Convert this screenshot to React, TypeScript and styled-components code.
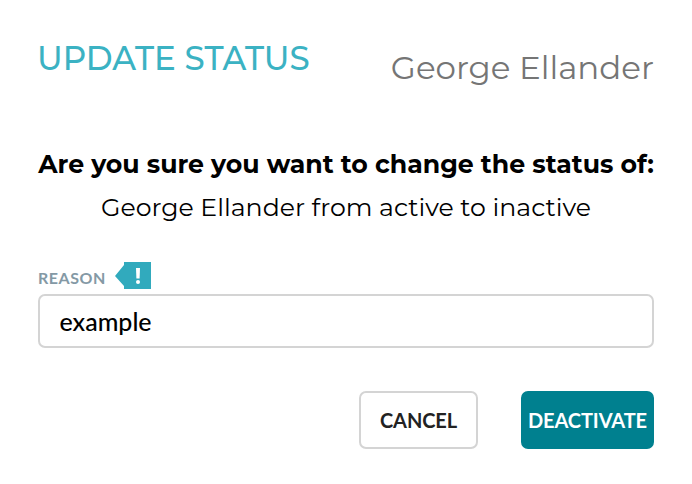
import React, { useState } from "react";
import styled, { createGlobalStyle } from "styled-components";

const GlobalStyle = createGlobalStyle`
  *, *::before, *::after { box-sizing: border-box; }
  body { margin: 0; background: #fff; }
`;

const Dialog = styled.main`
  width: 692px;
  height: 484px;
  padding: 38px 38px 0;
  background: #fff;
  color: #000;
  font-family: Montserrat, Inter, "Open Sans", sans-serif;
  white-space: nowrap;
  overflow: hidden;
`;

const Header = styled.header`
  display: flex;
  justify-content: space-between;
  align-items: flex-start;
  height: 102px;
`;

const Title = styled.h1`
  margin: 0 0 0 -1px;
  font-size: 32.5px;
  font-weight: 500;
  line-height: 42px;
  color: #3bb2c3;
`;

const PersonName = styled.span`
  margin: 9px 0 0;
  font-size: 32.5px;
  font-weight: 400;
  line-height: 42px;
  color: #757575;
`;

const Message = styled.section`
  display: flex;
  flex-direction: column;
  align-items: center;
  height: 118px;
`;

const Question = styled.strong`
  margin-top: 6px;
  font-size: 25.2px;
  font-weight: 700;
  line-height: 36px;
`;

const Change = styled.span`
  margin-top: 7px;
  font-size: 25.2px;
  line-height: 36px;
`;

const Field = styled.div`
  font-family: Lato, sans-serif;
`;

const LabelRow = styled.div`
  display: flex;
  height: 36px;
  padding-top: 4px;
`;

const Label = styled.label`
  width: 77px;
  padding-top: 6px;
  font-size: 16px;
  font-weight: 700;
  line-height: 20px;
  letter-spacing: 0.55px;
  color: #8499a5;
`;

const RequiredFlag = styled.svg`
  display: block;
  width: 36px;
  height: 27px;
`;

const Input = styled.input`
  display: block;
  width: 616px;
  height: 54px;
  padding: 0 19.5px;
  border: 2px solid #d4d4d4;
  border-radius: 7px;
  outline: none;
  background: #fff;
  color: #000;
  font: 500 25px Lato, sans-serif;
`;

const Actions = styled.footer`
  display: flex;
  justify-content: flex-end;
  gap: 43px;
  margin-top: 43px;
`;

const Button = styled.button<{ $primary?: boolean }>`
  width: ${(p) => (p.$primary ? 133 : 119)}px;
  height: 58px;
  padding: 0;
  border: 2px solid ${(p) => (p.$primary ? "#00808f" : "#d4d4d4")};
  border-radius: 7px;
  background: ${(p) => (p.$primary ? "#00808f" : "#fff")};
  color: ${(p) => (p.$primary ? "#fff" : "#222")};
  font: 700 20px Lato, sans-serif;
  letter-spacing: -0.1px;
`;

export default function App() {
  const [reason, setReason] = useState("example");
  return (
    <Dialog>
      <GlobalStyle />
      <Header>
        <Title>UPDATE STATUS</Title>
        <PersonName>George Ellander</PersonName>
      </Header>
      <Message>
        <Question>Are you sure you want to change the status of:</Question>
        <Change>George Ellander from active to inactive</Change>
      </Message>
      <Field>
        <LabelRow>
          <Label htmlFor="reason">REASON</Label>
          <RequiredFlag viewBox="0 0 36 27" aria-hidden="true">
            <path d="M0 14 9 3V0h27v27H9v-3z" fill="#31aabd" />
            <path d="M21 6h4l-.4 10.5h-3.2z" fill="#fff" />
            <circle cx="23" cy="20" r="2" fill="#fff" />
          </RequiredFlag>
        </LabelRow>
        <Input id="reason" value={reason} onChange={(e) => setReason(e.target.value)} />
      </Field>
      <Actions>
        <Button type="button">CANCEL</Button>
        <Button type="button" $primary>DEACTIVATE</Button>
      </Actions>
    </Dialog>
  );
}
